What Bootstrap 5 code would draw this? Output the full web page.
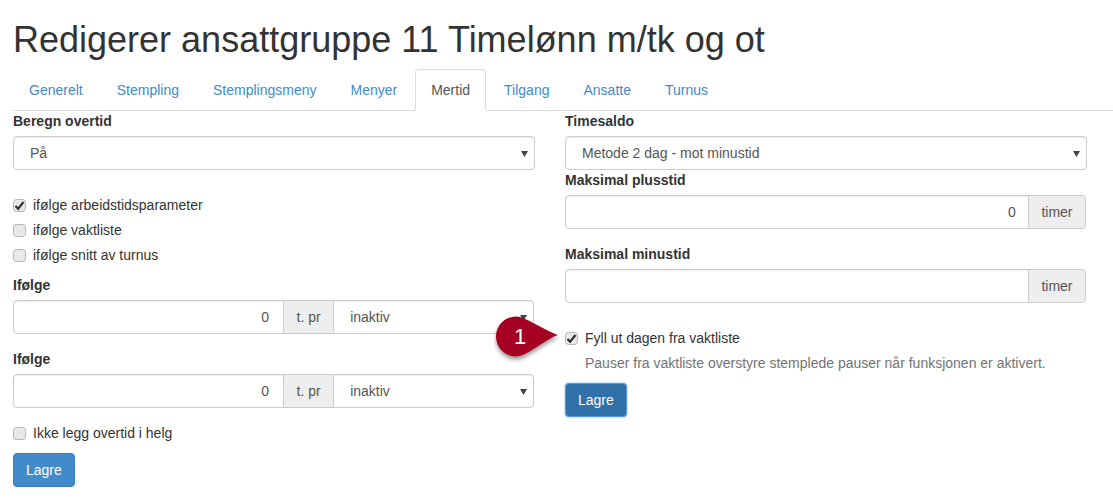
<!DOCTYPE html>
<html lang="no">
<head>
  <meta charset="UTF-8" />
  <meta name="viewport" content="width=device-width, initial-scale=1.0" />
  <title>Redigerer ansattgruppe</title>
  <link href="https://cdn.jsdelivr.net/npm/bootstrap@5.3.3/dist/css/bootstrap.min.css" rel="stylesheet">
  <script src="https://cdn.jsdelivr.net/npm/bootstrap@5.3.3/dist/js/bootstrap.bundle.min.js"></script>
  <style>
    body {
      font-family: "Liberation Sans", Arial, sans-serif;
      font-size: 14px;
      line-height: 20px;
      color: #333;
      background: #fff;
      overflow: hidden;
    }
    .page-wrap { padding: 20px 0 0 13px; position: relative; height: 502px; }
    .page-title { font-size: 36px; line-height: 40px; font-weight: 400; margin: 0 0 9px; color: #333; }
    .nav-tabs { border-bottom: 1px solid #ddd; }
    .nav-tabs .nav-item { margin-right: 2px; margin-bottom: -1px; }
    .nav-tabs .nav-link {
      padding: 10px 15px;
      line-height: 20px;
      color: #428bca;
      border: 1px solid transparent;
      border-radius: 4px 4px 0 0;
      margin: 0;
    }
    .nav-tabs .nav-link.active { color: #555; border-color: #ddd #ddd #fff; background: #fff; }
    .form-area { width: 1074px; }
    .form-area .row { --bs-gutter-x: 30px; }
    .field-label { display: block; font-weight: 700; margin: 0 0 5px; line-height: 20px; }
    .form-select, .form-control {
      height: 34px;
      font-size: 14px;
      line-height: 20px;
      color: #555;
      border: 1px solid #ccc;
      border-radius: 4px;
      box-shadow: inset 0 1px 1px rgba(0,0,0,.075);
    }
    .form-control { padding: 6px 12px; text-align: right; }
    .form-select {
      padding: 6px 12px 6px 16px;
      background-image: url("data:image/svg+xml,%3Csvg xmlns='http://www.w3.org/2000/svg' width='7' height='7'%3E%3Cpath d='M0 1h7L3.5 7z' fill='%23444'/%3E%3C/svg%3E");
      background-position: right 6px center;
      background-size: 7px 7px;
    }
    .input-group { width: 521px; margin-bottom: 15px; }
    .input-group-text {
      font-size: 14px;
      line-height: 20px;
      color: #555;
      background: #eee;
      border: 1px solid #ccc;
      padding: 6px 12.5px;
      border-radius: 4px;
    }
    .qty-input { flex: 0 0 271px !important; width: 271px !important; padding-right: 14px; }
    .select-gap { margin-bottom: 25px; }
    .form-check { min-height: 20px; padding-left: 20px; margin: 0 0 5px; }
    .form-check-input {
      width: 13px;
      height: 13px;
      margin-top: 4px;
      margin-left: -20px !important;
      background-color: #e8e8e8;
      border: 1px solid #b5b5b5;
      border-radius: 3px;
    }
    .form-check-input:checked {
      background-color: #e8e8e8;
      border-color: #b5b5b5;
      background-image: url("data:image/svg+xml,%3Csvg xmlns='http://www.w3.org/2000/svg' viewBox='0 0 13 13'%3E%3Cpath d='M2.5 7l2.6 2.8L10.5 3' fill='none' stroke='%23333' stroke-width='2.2'/%3E%3C/svg%3E");
      background-size: 13px 13px;
    }
    .form-check-label { line-height: 20px; }
    .check-last { margin-bottom: 10px; }
    .check-weekend { margin-top: 15px; margin-bottom: 10px; }
    .minus-group { margin-bottom: 25px; }
    .help-line { color: #737373; margin: 0 0 10px; padding-left: 20px; line-height: 20px; }
    .btn-save {
      background: #428bca;
      border: 1px solid #357ebd;
      color: #fff;
      font-size: 14px;
      line-height: 20px;
      padding: 6px 12px;
      border-radius: 4px;
    }
    .btn-save.is-focused { background: #3071a9; border-color: #5b9dd9; box-shadow: 0 0 2px #5b9dd9; }
    .callout-pin { position: absolute; left: 494px; top: 314px; width: 68px; height: 50px; }
    .callout-num {
      position: absolute;
      left: 495px;
      top: 324px;
      width: 50px;
      text-align: center;
      color: #fff;
      font-size: 22px;
      line-height: 26px;
    }
  </style>
</head>
<body>
<div class="page-wrap">
  <h1 class="page-title">Redigerer ansattgruppe 11 Timelønn m/tk og ot</h1>

  <ul class="nav nav-tabs">
    <li class="nav-item"><a class="nav-link" href="#">Generelt</a></li>
    <li class="nav-item"><a class="nav-link" href="#">Stempling</a></li>
    <li class="nav-item"><a class="nav-link" href="#">Stemplingsmeny</a></li>
    <li class="nav-item"><a class="nav-link" href="#">Menyer</a></li>
    <li class="nav-item"><a class="nav-link active" href="#">Mertid</a></li>
    <li class="nav-item"><a class="nav-link" href="#">Tilgang</a></li>
    <li class="nav-item"><a class="nav-link" href="#">Ansatte</a></li>
    <li class="nav-item"><a class="nav-link" href="#">Turnus</a></li>
  </ul>

  <div class="form-area">
    <div class="row">
      <div class="col-6">
        <label class="field-label">Beregn overtid</label>
        <select class="form-select select-gap"><option>På</option></select>
        <div class="form-check">
          <input class="form-check-input" type="checkbox" checked>
          <label class="form-check-label">ifølge arbeidstidsparameter</label>
        </div>
        <div class="form-check">
          <input class="form-check-input" type="checkbox">
          <label class="form-check-label">ifølge vaktliste</label>
        </div>
        <div class="form-check check-last">
          <input class="form-check-input" type="checkbox">
          <label class="form-check-label">ifølge snitt av turnus</label>
        </div>
        <label class="field-label">Ifølge</label>
        <div class="input-group">
          <input class="form-control qty-input" type="text" value="0">
          <span class="input-group-text">t. pr</span>
          <select class="form-select"><option>inaktiv</option></select>
        </div>
        <label class="field-label">Ifølge</label>
        <div class="input-group">
          <input class="form-control qty-input" type="text" value="0">
          <span class="input-group-text">t. pr</span>
          <select class="form-select"><option>inaktiv</option></select>
        </div>
        <div class="form-check check-weekend">
          <input class="form-check-input" type="checkbox">
          <label class="form-check-label">Ikke legg overtid i helg</label>
        </div>
        <button class="btn btn-save" type="button">Lagre</button>
      </div>

      <div class="col-6">
        <label class="field-label">Timesaldo</label>
        <select class="form-select"><option>Metode 2 dag - mot minustid</option></select>
        <label class="field-label">Maksimal plusstid</label>
        <div class="input-group">
          <input class="form-control" type="text" value="0">
          <span class="input-group-text">timer</span>
        </div>
        <label class="field-label">Maksimal minustid</label>
        <div class="input-group minus-group">
          <input class="form-control" type="text">
          <span class="input-group-text">timer</span>
        </div>
        <div class="form-check">
          <input class="form-check-input" type="checkbox" checked>
          <label class="form-check-label">Fyll ut dagen fra vaktliste</label>
        </div>
        <p class="help-line">Pauser fra vaktliste overstyre stemplede pauser når funksjonen er aktivert.</p>
        <button class="btn btn-save is-focused" type="button">Lagre</button>
      </div>
    </div>
  </div>

  <svg class="callout-pin" viewBox="0 0 68 50">
    <defs>
      <filter id="pinShadow" x="-20%" y="-20%" width="140%" height="150%">
        <feDropShadow dx="0" dy="3" stdDeviation="2" flood-color="#000" flood-opacity=".4"/>
      </filter>
    </defs>
    <path d="M22 2.5C31 2.5 50 16 64 21C50 26 33 42.5 22 42.5A20 20 0 0 1 22 2.5Z" fill="#a50021" filter="url(#pinShadow)"/>
  </svg>
  <span class="callout-num">1</span>
</div>
</body>
</html>
